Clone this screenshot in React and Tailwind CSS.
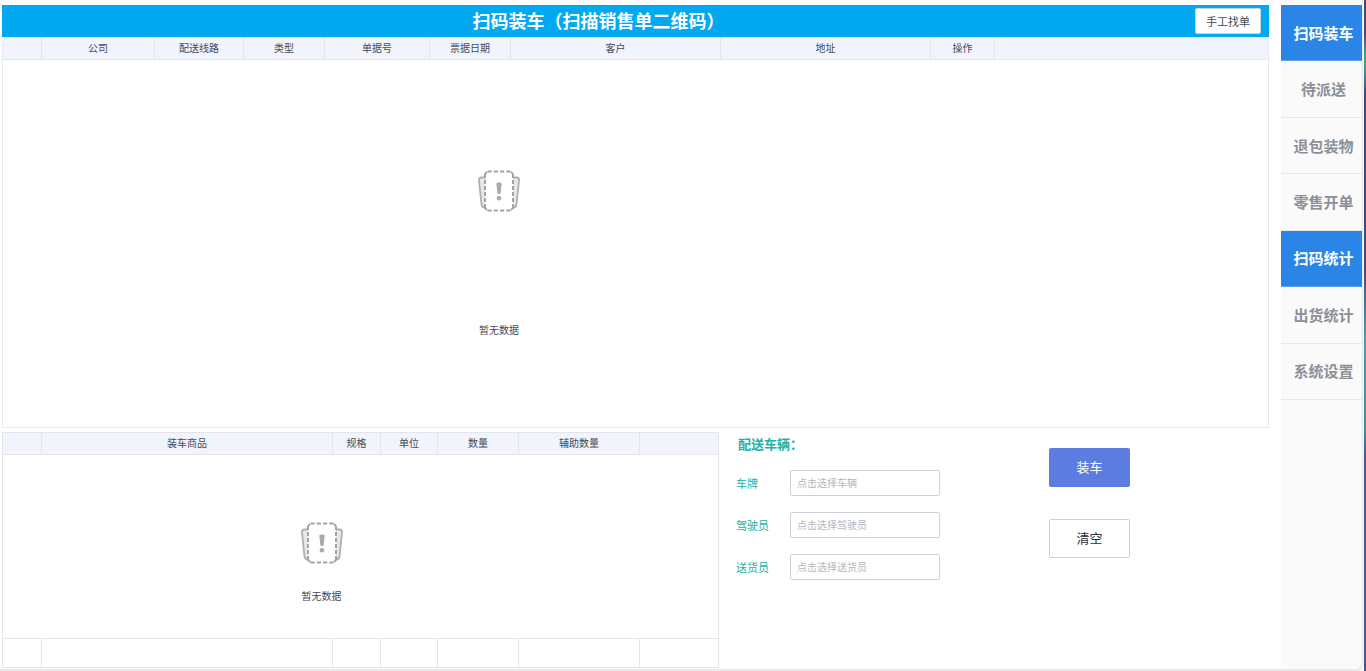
import { useState } from 'react';
import clsx from 'clsx';

const menus = ['扫码装车', '待派送', '退包装物', '零售开单', '扫码统计', '出货统计', '系统设置'];

const orderColumns = [
    { title: '', width: 'w-[39px]' },
    { title: '公司', width: 'w-[113px]' },
    { title: '配送线路', width: 'w-[89px]' },
    { title: '类型', width: 'w-[81px]' },
    { title: '单据号', width: 'w-[105px]' },
    { title: '票据日期', width: 'w-[81px]' },
    { title: '客户', width: 'w-[210px]' },
    { title: '地址', width: 'w-[210px]' },
    { title: '操作', width: 'w-[64px]' },
];

const goodsColumns = [
    { title: '', width: 'w-[39px]' },
    { title: '装车商品', width: 'w-[291px]' },
    { title: '规格', width: 'w-[48px]' },
    { title: '单位', width: 'w-[57px]' },
    { title: '数量', width: 'w-[81px]' },
    { title: '辅助数量', width: 'w-[121px]' },
];

const fields = [
    { id: 'plate', label: '车牌', placeholder: '点击选择车辆' },
    { id: 'driver', label: '驾驶员', placeholder: '点击选择驾驶员' },
    { id: 'courier', label: '送货员', placeholder: '点击选择送货员' },
];

const EmptyIcon = () => (
    <svg width="42" height="42" viewBox="0 0 42 42" fill="none" aria-hidden="true">
        {/* sheets behind */}
        <path d="M8 7.500H3Q.7 8 1 10.500L3.500 34.500Q4 37.500 8 38z" fill="#e8e8e8" stroke="#b0b0b0" strokeWidth="1.800" strokeLinejoin="round" />
        <path d="M34 7.500h5q2.300.5 2 3L38.500 34.500Q38 37.500 34 38z" fill="#e8e8e8" stroke="#b0b0b0" strokeWidth="1.800" strokeLinejoin="round" />
        {/* front card */}
        <path d="M9.500 1.500h23l2.500 2.500v34l-2.500 2.500h-23L7 38V4z" fill="#fff" />
        <path d="M9.500 1.500h23M9.500 40.500h23" stroke="#a3a3a3" strokeWidth="2" strokeDasharray="4.200 2.060" />
        <path d="M7 4v34M35 4v34" stroke="#a3a3a3" strokeWidth="2" strokeDasharray="4 2" />
        <path d="M9 2 7 4M33 2l2 2M9 40l-2-2M33 40l2-2" stroke="#a3a3a3" strokeWidth="1.800" />
        <path d="M18.800 13.500q2.200-1.400 4.400 0l-1.200 10h-2z" fill="#aaa" stroke="#aaa" strokeLinejoin="round" />
        <circle cx="21" cy="28.300" r="2.300" fill="#aaa" />
    </svg>
);

const TableHead = ({ columns }) => (
    <thead className="bg-[#f1f4fd]">
        <tr className="h-[22px]">
            {columns.map((col) => (
                <th key={col.title} className={clsx(col.width, 'border-r border-b border-[#e3e5ea] px-0 pt-0 pb-0.5 text-center leading-[18px] font-normal')}>
                    {col.title}
                </th>
            ))}
            <th className="border-b border-[#e8eaf0] p-0"></th>
        </tr>
    </thead>
);

const App = () => {
    const [active] = useState(['扫码装车', '扫码统计']);

    return (
        <div className="flex h-screen bg-[#f8f8f9] font-['Noto_Sans_CJK_SC',sans-serif] text-[10px] leading-5 text-[#454a55]">
            <div className="flex min-w-0 flex-1 rounded-br-lg border-r border-b-2 border-[#e6e8eb] bg-white">
                <main className="flex min-w-0 flex-1 flex-col gap-1 pt-[5px] pr-3 pb-px pl-0.5">
                    {/* Orders */}
                    <section className="flex min-h-0 flex-1 flex-col">
                        <header className="flex h-8 shrink-0 items-center bg-[#02a9f1] pr-2">
                            <h1 className="flex-1 pb-0.5 text-center text-lg leading-[30px] font-bold text-white">扫码装车（扫描销售单二维码）</h1>
                            <button className="h-[26px] w-[66px] rounded-xs border border-[#c8d4dc] bg-white text-[11px]">手工找单</button>
                        </header>
                        <div className="min-h-0 flex-1 border border-[#e8eaed]">
                            <table className="w-full table-fixed border-separate border-spacing-0">
                                <TableHead columns={orderColumns} />
                                <tbody>
                                    <tr>
                                        <td colSpan={orderColumns.length} className="p-0">
                                            <div className="flex flex-col items-center gap-[108px] pt-[110px]">
                                                <EmptyIcon />
                                                <span>暂无数据</span>
                                            </div>
                                        </td>
                                    </tr>
                                </tbody>
                            </table>
                        </div>
                    </section>

                    <div className="flex h-[236px] shrink-0">
                        {/* Goods on the vehicle */}
                        <section className="w-[717px] shrink-0 border border-[#e3e5ea]">
                            <table className="h-full w-full table-fixed border-separate border-spacing-0">
                                <TableHead columns={goodsColumns} />
                                <tbody>
                                    <tr>
                                        <td colSpan={goodsColumns.length} className="p-0 align-top">
                                            <div className="flex flex-col items-center gap-[22px] pt-[67px]">
                                                <EmptyIcon />
                                                <span>暂无数据</span>
                                            </div>
                                        </td>
                                    </tr>
                                </tbody>
                                <tfoot>
                                    <tr className="h-[29px]">
                                        {goodsColumns.map((col) => (
                                            <td key={col.title} className="border-t border-r border-[#e3e5ea] p-0"></td>
                                        ))}
                                        <td className="border-t border-[#e3e5ea] p-0"></td>
                                    </tr>
                                </tfoot>
                            </table>
                        </section>

                        {/* Delivery vehicle */}
                        <form className="flex items-start pl-[17px]" onSubmit={(e) => e.preventDefault()}>
                            <div>
                                <h2 className="mt-0.5 mb-4 pl-0.5 text-[13px] font-bold text-[#20b2aa]">配送车辆：</h2>
                                <div className="flex flex-col gap-4">
                                    {fields.map((field) => (
                                        <div key={field.id} className="flex items-center">
                                            <label htmlFor={field.id} className="w-[54px] text-[11px] text-[#20b2aa]">{field.label}</label>
                                            <input
                                                id={field.id}
                                                type="text"
                                                placeholder={field.placeholder}
                                                className="h-[26px] w-[150px] rounded-xs border border-[#cfd0d3] bg-white px-1.5 pb-0.5 outline-none placeholder:text-[#b4b7bf]"
                                            />
                                        </div>
                                    ))}
                                </div>
                            </div>
                            <div className="mt-4 ml-[109px] flex flex-col gap-8 text-[13px]">
                                <button type="submit" className="h-[39px] w-[81px] rounded-xs bg-[#5c7cdf] pb-0.5 text-white">装车</button>
                                <button type="reset" className="h-[39px] w-[81px] rounded-xs border border-[#cfd0d3] bg-white pb-0.5 text-[#2b303b]">清空</button>
                            </div>
                        </form>
                    </div>
                </main>

                {/* Side menu */}
                <nav className="w-[81px] shrink-0 rounded-br-lg bg-[#fafafa] pt-[5px]">
                    <div className="grid h-[395px] grid-rows-7">
                        {menus.map((menu) => (
                            <button
                                key={menu}
                                className={clsx(
                                    'border-b pl-1 text-[15px] font-bold',
                                    active.includes(menu) ? 'border-[#5ba1ec] bg-[#2a85e6] text-white' : 'border-[#e8e8e9] text-[#8c9097]'
                                )}
                            >
                                {menu}
                            </button>
                        ))}
                    </div>
                </nav>
            </div>
            <div className="ml-px w-0.5 shrink-0 bg-[linear-gradient(#3d4a7c_5%,#3f9a9a_8%,#3f9a9a_10%,#3d4a7c_14%,#3d4a7c_40%,#4a9aaa_50%,#3f8f9a_64%,#46558f_68%)]"></div>
        </div>
    );
};

export default App;
